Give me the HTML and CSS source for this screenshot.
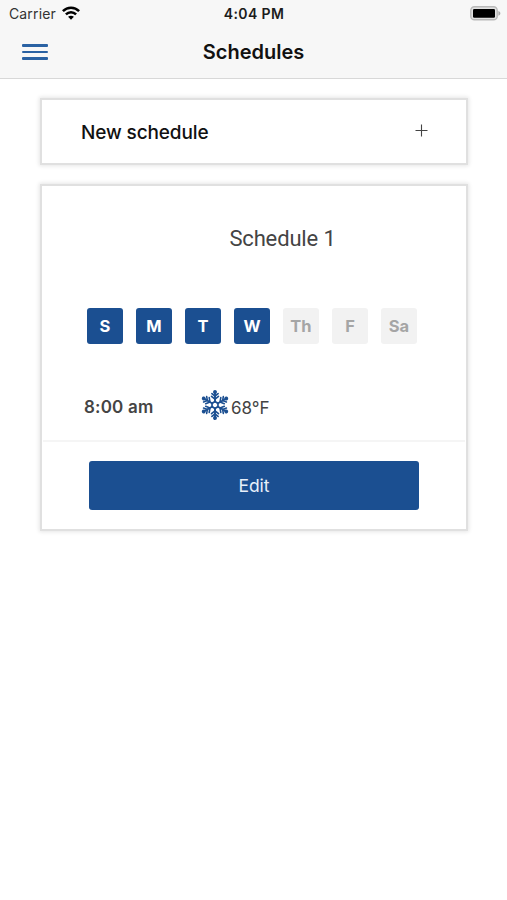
FILE: index.html
```html
<!DOCTYPE html>
<html lang="en">
<head>
<meta charset="utf-8">
<title>Schedules</title>
<link rel="stylesheet" href="styles.css">
</head>
<body>
<header class="header">
  <div class="status">
    <div class="status-left">
      <span class="carrier">Carrier</span>
      <svg class="wifi" width="18" height="14" viewBox="0 0 18 14" fill="none" stroke="#000" stroke-width="2.5">
        <path d="M.9 5.2C5.4.6 12.6.6 17.100 5.200"/>
        <path d="M3.900 8.400c2.900-2.900 7.300-2.900 10.200 0"/>
        <path d="M9 13.800 6.100 10.800c1.700-1.500 4.100-1.500 5.800 0z" fill="#000" stroke="none"/>
      </svg>
    </div>
    <span class="clock">4:04 PM</span>
    <div class="status-right">
      <svg class="battery" width="31" height="15" viewBox="0 0 31 15">
        <rect x=".8" y=".8" width="26.400" height="13" rx="3.600" fill="#e2e2e2" stroke="#b9b9b9" stroke-width="1.400"/>
        <rect x="3" y="3" width="22" height="8.800" rx="1.200" fill="#000"/>
        <path d="M28.400 5c2.600 1 2.600 3.700 0 4.700z" fill="#aaa"/>
      </svg>
    </div>
  </div>
  <nav class="navbar">
    <button class="menu" aria-label="Menu"><span></span><span></span><span></span></button>
    <h1 class="title">Schedules</h1>
    <span></span>
  </nav>
</header>
<main class="content">
  <section class="card new-card">
    <span class="new-label">New schedule</span>
    <svg class="plus" width="13" height="13" viewBox="0 0 13 13" stroke="#444" stroke-width="1.100"><path d="M.5 6.500h12M6.500.5v12"/></svg>
  </section>
  <section class="card schedule">
    <h2 class="name">Schedule 1</h2>
    <div class="days">
      <span class="day on">S</span><span class="day on">M</span><span class="day on">T</span><span class="day on">W</span><span class="day">Th</span><span class="day">F</span><span class="day">Sa</span>
    </div>
    <div class="setting">
      <span class="time">8:00 am</span>
      <svg class="snow" width="28" height="32" viewBox="-14 -16 28 32" fill="none" stroke="#1b4f91" stroke-width="1.600" stroke-linecap="round">
        <defs>
          <g id="arm">
            <path d="M0-3V-13" stroke-width="1.900"/>
            <path d="M0-8.800-3.100-11.400M0-8.800 3.100-11.400M0-5.800-3.500-8.700M0-5.800 3.500-8.700"/>
            <circle cx="0" cy="-13" r="1.300" fill="#1b4f91" stroke-width="1.300"/>
          </g>
        </defs>
        <path d="M0-3.500 3-1.700V1.700L0 3.500-3 1.700V-1.700z"/>
        <use href="#arm"/><use href="#arm" transform="rotate(60)"/><use href="#arm" transform="rotate(120)"/><use href="#arm" transform="rotate(180)"/><use href="#arm" transform="rotate(240)"/><use href="#arm" transform="rotate(300)"/>
      </svg>
      <span class="temp">68°F</span>
    </div>
    <div class="actions"><button class="edit">Edit</button></div>
  </section>
</main>
</body>
</html>
```
FILE: styles.css
```css
* { box-sizing: border-box; }
body { margin: 0; min-height: 900px; background: #fff; color: #111; font-family: Inter, "Liberation Sans", sans-serif; }
button { border: 0; padding: 0; background: none; font: inherit; }
h1, h2 { margin: 0; }
svg { display: block; flex: none; }
.header { height: 79px; background: #f7f7f7; border-bottom: 1px solid #d8d8d8; }
.status { display: grid; grid-template-columns: 1fr auto 1fr; height: 28px; padding: 0 6px 0 7px; align-items: center; font-size: 14px; line-height: 28px; }
.status-left { display: flex; align-items: center; gap: 6px; padding-left: 2px; }
.carrier { color: #333; letter-spacing: .14px; }
.wifi { margin-bottom: 3px; }
.clock { font-weight: 600; font-size: 14px; letter-spacing: .4px; color: #1c1c1c; }
.status-right { display: flex; justify-content: flex-end; margin-bottom: 2px; }
.navbar { display: grid; grid-template-columns: 1fr auto 1fr; align-items: center; height: 48px; padding: 0 22px; }
.menu { display: flex; flex-direction: column; gap: 4px; width: 26px; }
.menu span { height: 2.500px; background: #2a62a3; border-radius: 1px; }
.title { font-size: 20px; font-weight: 600; line-height: 48px; color: #111; }
.content { display: flex; flex-direction: column; gap: 19px; padding: 98px 39px 0 40px; margin-top: -79px; }
.card { border: 2px solid #e0e0e0; background: #fff; box-shadow: 0 0 4px 1px rgba(0, 0, 0, .1); }
.new-card { display: flex; align-items: center; justify-content: space-between; height: 67px; padding: 0 38px 0 39px; }
.new-label { font-size: 19px; font-weight: 500; padding-top: 1px; letter-spacing: -.12px; }
.plus { margin-bottom: 3px; }
.schedule { height: 347px; }
.name { margin-top: 38px; padding-left: 57px; height: 30px; font: 400 22px/30px Roboto, sans-serif; letter-spacing: -.15px; color: #444; text-align: center; }
.days { display: flex; gap: 13px; margin: 54px 0 0 45px; }
.day { width: 36px; height: 36px; border-radius: 3px; background: #f2f2f2; color: #a5a5a5; font-size: 16.500px; line-height: 36px; font-weight: 700; text-align: center; }
.day.on { background: #1b4f91; color: #fff; }
.setting { display: flex; align-items: center; height: 60px; margin: 31px 0 0 42px; color: #444; }
.time { width: 117px; padding-top: 3px; font-size: 17px; font-weight: 600; letter-spacing: .2px; }
.snow { margin-right: 2px; }
.temp { font-size: 17px; padding-top: 6px; }
.actions { margin: 5px 1px 0; padding: 19px 46px; border-top: 2px solid #f5f5f5; }
.edit { display: block; width: 330px; height: 49px; border-radius: 3px; background: #1b4f91; color: #e8f0fa; font-size: 17.500px; text-align: center; }
```
